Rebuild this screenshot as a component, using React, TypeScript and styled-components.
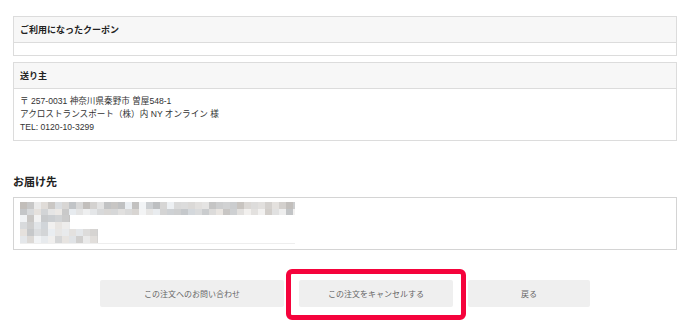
import React from "react";
import styled, { createGlobalStyle } from "styled-components";

const Global = createGlobalStyle`
  html, body { margin: 0; padding: 0; background: #fff; }
  body {
    font-family: "Liberation Sans", "Noto Sans CJK JP", sans-serif;
    color: #333;
  }
`;

const Page = styled.div`
  width: 690px;
  height: 330px;
  padding: 16px 13px 0 13px;
  box-sizing: border-box;
  overflow: hidden;
`;

const Card = styled.section`
  border: 1px solid #dcdcdc;
  & + & { margin-top: 6px; }
`;

const CardHeader = styled.div`
  height: 25px;
  background: #f7f7f7;
  border-bottom: 1px solid #dcdcdc;
  padding-left: 6px;
  display: flex;
  align-items: center;
  font-size: 9px;
  font-weight: 700;
  color: #222;
`;

const CardBody = styled.div`
  padding: 6px;
  font-size: 8.6px;
  line-height: 13px;
  color: #333;
`;

const Heading = styled.h2`
  margin: 33px 0 7px 0;
  font-size: 11px;
  line-height: 16px;
  font-weight: 700;
  color: #222;
`;

const AddressBox = styled.div`
  border: 1px solid #d4d4d4;
  padding: 4px 6px;
  height: 43px;
`;

const Actions = styled.div`
  margin-top: 30px;
  display: flex;
  justify-content: center;
  gap: 15px;
`;

const Button = styled.button<{ $w: number }>`
  width: ${(p) => p.$w}px;
  height: 27px;
  border: none;
  border-radius: 2px;
  background: #efefef;
  color: #666;
  font-family: inherit;
  font-size: 8px;
  padding: 0;
  cursor: pointer;
`;

const Highlight = styled.span`
  position: relative;
  display: inline-flex;
`;

const HighlightFrame = styled.span`
  position: absolute;
  top: -11px;
  left: -13px;
  right: -13px;
  bottom: -13px;
  border: 5px solid #f5033c;
  border-radius: 6px;
  pointer-events: none;
`;

function rand(seed: number) {
  const x = Math.sin(seed * 12.9898) * 43758.5453;
  return x - Math.floor(x);
}

const rows: { y: number; h: number; w: number }[] = [
  { y: 0, h: 7, w: 275 },
  { y: 7, h: 6, w: 275 },
  { y: 13, h: 7, w: 50 },
  { y: 20, h: 7, w: 50 },
  { y: 27, h: 7, w: 78 },
  { y: 34, h: 7, w: 78 },
];

function Mosaic() {
  const cells: React.ReactElement[] = [];
  rows.forEach((r, ri) => {
    for (let x = 0; x < r.w; x += 7) {
      const v = rand(ri * 97 + x);
      const g = Math.round(190 + v * 54);
      const tint = Math.round((rand(ri * 31 + x * 3) - 0.5) * 8);
      cells.push(
        <rect
          key={`${ri}-${x}`}
          x={x}
          y={r.y}
          width={Math.min(7, r.w - x)}
          height={r.h}
          fill={`rgb(${g - tint},${g},${g + tint})`}
        />
      );
    }
  });
  return (
    <svg width="280" height="42" viewBox="0 0 280 42" style={{ display: "block" }}>
      {cells}
      <rect x="0" y="41" width="275" height="1" fill="#eeeeee" />
    </svg>
  );
}

export default function App() {
  return (
    <>
      <Global />
      <Page>
        <Card>
          <CardHeader>ご利用になったクーポン</CardHeader>
          <CardBody />
        </Card>
        <Card>
          <CardHeader>送り主</CardHeader>
          <CardBody>
            〒 257-0031 神奈川県秦野市 曽屋548-1
            <br />
            アクロストランスポート（株）内 NY オンライン 様
            <br />
            TEL: 0120-10-3299
          </CardBody>
        </Card>
        <Heading>お届け先</Heading>
        <AddressBox>
          <Mosaic />
        </AddressBox>
        <Actions>
          <Button $w={184}>この注文へのお問い合わせ</Button>
          <Highlight>
            <Button $w={154}>この注文をキャンセルする</Button>
            <HighlightFrame />
          </Highlight>
          <Button $w={122}>戻る</Button>
        </Actions>
      </Page>
    </>
  );
}
